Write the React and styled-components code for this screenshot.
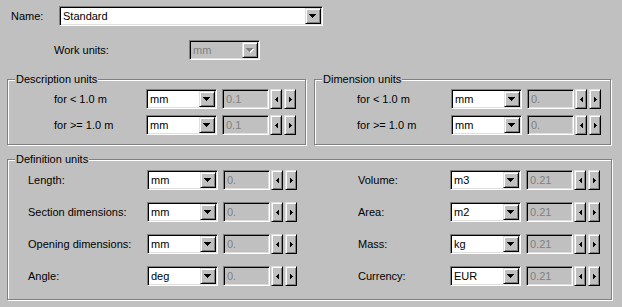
import styled, { createGlobalStyle } from "styled-components";

const Global = createGlobalStyle`
  body {
    margin: 0;
    background: #c0c0c0;
  }
`;

const descRows = [
  { label: "for < 1.0 m", unit: "mm", value: "0.1" },
  { label: "for >= 1.0 m", unit: "mm", value: "0.1" },
];

const dimRows = [
  { label: "for < 1.0 m", unit: "mm", value: "0." },
  { label: "for >= 1.0 m", unit: "mm", value: "0." },
];

const defLeft = [
  { label: "Length:", unit: "mm", value: "0." },
  { label: "Section dimensions:", unit: "mm", value: "0." },
  { label: "Opening dimensions:", unit: "mm", value: "0." },
  { label: "Angle:", unit: "deg", value: "0." },
];

const defRight = [
  { label: "Volume:", unit: "m3", value: "0.21" },
  { label: "Area:", unit: "m2", value: "0.21" },
  { label: "Mass:", unit: "kg", value: "0.21" },
  { label: "Currency:", unit: "EUR", value: "0.21" },
];

const DownArrow = ({ disabled }) => (
  <svg width="8" height="5" viewBox="0 0 8 5" shapeRendering="crispEdges">
    {disabled && <polygon points="1,1 8,1 4.5,5" fill="#fff" />}
    <polygon points="0,0 7,0 3.5,4" fill={disabled ? "#808080" : "#000"} />
  </svg>
);

const SideArrow = ({ dir }) => (
  <svg width="3" height="5" viewBox="0 0 3 5" shapeRendering="crispEdges">
    {dir === "left" ? (
      <polygon points="3,0 3,5 0,2.5" fill="#000" />
    ) : (
      <polygon points="0,0 0,5 3,2.5" fill="#000" />
    )}
  </svg>
);

const Combo = ({ value, width = 71, disabled }) => (
  <ComboBox $w={width} $disabled={disabled}>
    <ComboText $disabled={disabled}>{value}</ComboText>
    <DropBtn>
      <DownArrow disabled={disabled} />
    </DropBtn>
  </ComboBox>
);

const UnitRow = ({ row, labelWidth }) => (
  <Row>
    <Label $w={labelWidth}>{row.label}</Label>
    <Combo value={row.unit} />
    <Edit>{row.value}</Edit>
    <Spin>
      <SideArrow dir="left" />
    </Spin>
    <Spin $gap={2}>
      <SideArrow dir="right" />
    </Spin>
  </Row>
);

const App = () => {
  return (
    <Dialog>
      <Global />
      <NameRow>
        <Label $w={48}>Name:</Label>
        <Combo value="Standard" width={264} />
      </NameRow>

      <WorkRow>
        <Label $w={135}>Work units:</Label>
        <Combo value="mm" disabled />
      </WorkRow>

      <GroupsRow>
        <Group $w={299} $h={66}>
          <Legend>Description units</Legend>
          <GroupBody $top={9} $left={46} $gap={6}>
            {descRows.map((r) => (
              <UnitRow key={r.label} row={r} labelWidth={92} />
            ))}
          </GroupBody>
        </Group>
        <Group $w={297} $h={66}>
          <Legend>Dimension units</Legend>
          <GroupBody $top={9} $left={42} $gap={6}>
            {dimRows.map((r) => (
              <UnitRow key={r.label} row={r} labelWidth={94} />
            ))}
          </GroupBody>
        </Group>
      </GroupsRow>

      <DefGroup $w={605} $h={141}>
        <Legend>Definition units</Legend>
        <DefGrid>
          <GroupBody $top={0} $left={0} $gap={12}>
            {defLeft.map((r) => (
              <UnitRow key={r.label} row={r} labelWidth={119} />
            ))}
          </GroupBody>
          <GroupBody $top={0} $left={0} $gap={12}>
            {defRight.map((r) => (
              <UnitRow key={r.label} row={r} labelWidth={92} />
            ))}
          </GroupBody>
        </DefGrid>
      </DefGroup>
    </Dialog>
  );
};

export default App;

const Dialog = styled.div`
  width: 622px;
  height: 307px;
  box-sizing: border-box;
  background: #c0c0c0;
  font-family: "Liberation Sans", Arial, sans-serif;
  font-size: 11px;
  color: #000;
  display: flex;
  flex-direction: column;
  overflow: hidden;
`;

const NameRow = styled.div`
  display: flex;
  align-items: center;
  height: 20px;
  margin: 6px 0 0 11px;
`;

const WorkRow = styled.div`
  display: flex;
  align-items: center;
  height: 20px;
  margin: 14px 0 0 54px;
`;

const Label = styled.div`
  width: ${(p) => p.$w}px;
  flex-shrink: 0;
  white-space: nowrap;
`;

const sunken = `
  box-sizing: border-box;
  height: 20px;
  border: 1px solid;
  border-color: #808080 #fff #fff #808080;
  box-shadow: inset 1px 1px #000, inset -1px -1px #dfdfdf;
`;

const raised = `
  box-sizing: border-box;
  background: #c0c0c0;
  border: 1px solid;
  border-color: #dfdfdf #000 #000 #dfdfdf;
  box-shadow: inset 1px 1px #fff, inset -1px -1px #808080;
  display: flex;
  align-items: center;
  justify-content: center;
`;

const ComboBox = styled.div`
  ${sunken}
  width: ${(p) => p.$w}px;
  flex-shrink: 0;
  background: ${(p) => (p.$disabled ? "#c0c0c0" : "#fff")};
  display: flex;
  align-items: center;
  padding-left: 3px;
`;

const ComboText = styled.span`
  flex: 1;
  color: ${(p) => (p.$disabled ? "#808080" : "#000")};
  white-space: nowrap;
  overflow: hidden;
`;

const DropBtn = styled.div`
  ${raised}
  width: 16px;
  height: 16px;
  margin: 0 1px;
`;

const Edit = styled.div`
  ${sunken}
  width: 47px;
  flex-shrink: 0;
  margin-left: 5px;
  background: #c0c0c0;
  color: #808080;
  padding-left: 3px;
  display: flex;
  align-items: center;
`;

const Spin = styled.div`
  ${raised}
  width: 12px;
  height: 20px;
  flex-shrink: 0;
  margin-left: ${(p) => p.$gap || 1}px;
`;

const GroupsRow = styled.div`
  display: flex;
  gap: 8px;
  margin: 19px 0 0 7px;
`;

const Group = styled.div`
  position: relative;
  box-sizing: border-box;
  width: ${(p) => p.$w}px;
  height: ${(p) => p.$h}px;
  flex-shrink: 0;
  border: 1px solid #808080;
  box-shadow: inset 1px 1px #fff, 1px 1px #fff;
`;

const DefGroup = styled(Group)`
  margin: 14px 0 0 7px;
`;

const Legend = styled.span`
  position: absolute;
  top: -7px;
  left: 7px;
  padding: 0 1px;
  line-height: 13px;
  background: #c0c0c0;
  white-space: nowrap;
`;

const GroupBody = styled.div`
  display: flex;
  flex-direction: column;
  gap: ${(p) => p.$gap}px;
  padding: ${(p) => p.$top}px 0 0 ${(p) => p.$left}px;
`;

const DefGrid = styled.div`
  display: grid;
  grid-template-columns: 330px 1fr;
  padding: 10px 0 0 20px;
`;

const Row = styled.div`
  display: flex;
  align-items: center;
  height: 20px;
`;
